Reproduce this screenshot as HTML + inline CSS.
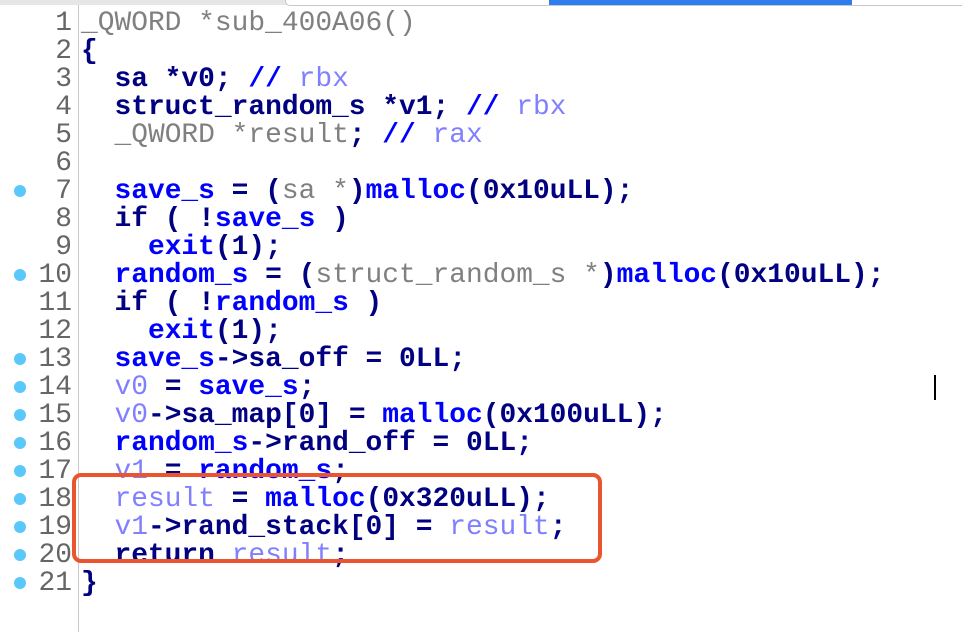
<!DOCTYPE html>
<html><head><meta charset="utf-8"><style>
html,body{margin:0;padding:0;width:962px;height:632px;overflow:hidden;background:#fff;position:relative}
.top{position:absolute;left:0;top:0;width:962px;height:5px;background:#e6e6e6}
.tab{position:absolute;left:285px;top:-2px;width:690px;height:6px;background:#fff;border:1px solid #c8c8c8;border-radius:0 0 0 5px}
.blue{position:absolute;left:549px;top:0;width:303px;height:5px;background:#2f7bf0}
.sep{position:absolute;left:78px;top:5px;width:1px;height:627px;background:#c8c8c8}
.code{position:absolute;left:0;top:10px;font-family:"Liberation Mono",monospace;font-size:27.9px;line-height:28px;white-space:pre}
.ln{position:absolute;left:0;width:72px;text-align:right;color:#666}
.t{position:absolute;left:81px;color:#000080;font-weight:bold}
.dot{position:absolute;left:14px;width:12px;height:12px;border-radius:50%;background:#5ac8fa}
.g{color:#808080;font-weight:normal}.b{color:#0000ff}.p{color:#8080ff;font-weight:normal}
.box{position:absolute;left:72px;top:473px;width:522px;height:82px;border:4px solid #e8552f;border-radius:9px}
.cur{position:absolute;left:934px;top:375px;width:2px;height:25px;background:#000}
</style></head><body>
<div class="top"></div><div class="tab"></div><div class="blue"></div>
<div class="sep"></div>
<div class="code">
<div class="ln" style="top:0">1</div><div class="t" style="top:0"><span class="g">_QWORD *sub_400A06()</span></div>
<div class="ln" style="top:28px">2</div><div class="t" style="top:28px">{</div>
<div class="ln" style="top:56px">3</div><div class="t" style="top:56px">  sa *v0; <span class="b">//</span> <span class="p">rbx</span></div>
<div class="ln" style="top:84px">4</div><div class="t" style="top:84px">  struct_random_s *v1; <span class="b">//</span> <span class="p">rbx</span></div>
<div class="ln" style="top:112px">5</div><div class="t" style="top:112px">  <span class="g">_QWORD *result</span>; <span class="b">//</span> <span class="p">rax</span></div>
<div class="ln" style="top:140px">6</div>
<div class="ln" style="top:168px">7</div><div class="t" style="top:168px">  <span class="b">save_s</span> = (<span class="g">sa *</span>)<span class="b">malloc</span>(0x10uLL);</div>
<div class="ln" style="top:196px">8</div><div class="t" style="top:196px">  if ( !<span class="b">save_s</span> )</div>
<div class="ln" style="top:224px">9</div><div class="t" style="top:224px">    <span class="b">exit</span>(1);</div>
<div class="ln" style="top:252px">10</div><div class="t" style="top:252px">  <span class="b">random_s</span> = (<span class="g">struct_random_s *</span>)<span class="b">malloc</span>(0x10uLL);</div>
<div class="ln" style="top:280px">11</div><div class="t" style="top:280px">  if ( !<span class="b">random_s</span> )</div>
<div class="ln" style="top:308px">12</div><div class="t" style="top:308px">    <span class="b">exit</span>(1);</div>
<div class="ln" style="top:336px">13</div><div class="t" style="top:336px">  <span class="b">save_s</span>-&gt;sa_off = 0LL;</div>
<div class="ln" style="top:364px">14</div><div class="t" style="top:364px">  <span class="p">v0</span> = <span class="b">save_s</span>;</div>
<div class="ln" style="top:392px">15</div><div class="t" style="top:392px">  <span class="p">v0</span>-&gt;sa_map[0] = <span class="b">malloc</span>(0x100uLL);</div>
<div class="ln" style="top:420px">16</div><div class="t" style="top:420px">  <span class="b">random_s</span>-&gt;rand_off = 0LL;</div>
<div class="ln" style="top:448px">17</div><div class="t" style="top:448px">  <span class="p">v1</span> = <span class="b">random_s</span>;</div>
<div class="ln" style="top:476px">18</div><div class="t" style="top:476px">  <span class="p">result</span> = <span class="b">malloc</span>(0x320uLL);</div>
<div class="ln" style="top:504px">19</div><div class="t" style="top:504px">  <span class="p">v1</span>-&gt;rand_stack[0] = <span class="p">result</span>;</div>
<div class="ln" style="top:532px">20</div><div class="t" style="top:532px">  return <span class="p">result</span>;</div>
<div class="ln" style="top:560px">21</div><div class="t" style="top:560px">}</div>
</div>
<div class="dot" style="top:185px"></div><div class="dot" style="top:269px"></div>
<div class="dot" style="top:353px"></div><div class="dot" style="top:381px"></div>
<div class="dot" style="top:409px"></div><div class="dot" style="top:437px"></div>
<div class="dot" style="top:465px"></div><div class="dot" style="top:493px"></div>
<div class="dot" style="top:521px"></div><div class="dot" style="top:549px"></div>
<div class="dot" style="top:577px"></div>
<div class="box"></div>
<div class="cur"></div>
</body></html>
